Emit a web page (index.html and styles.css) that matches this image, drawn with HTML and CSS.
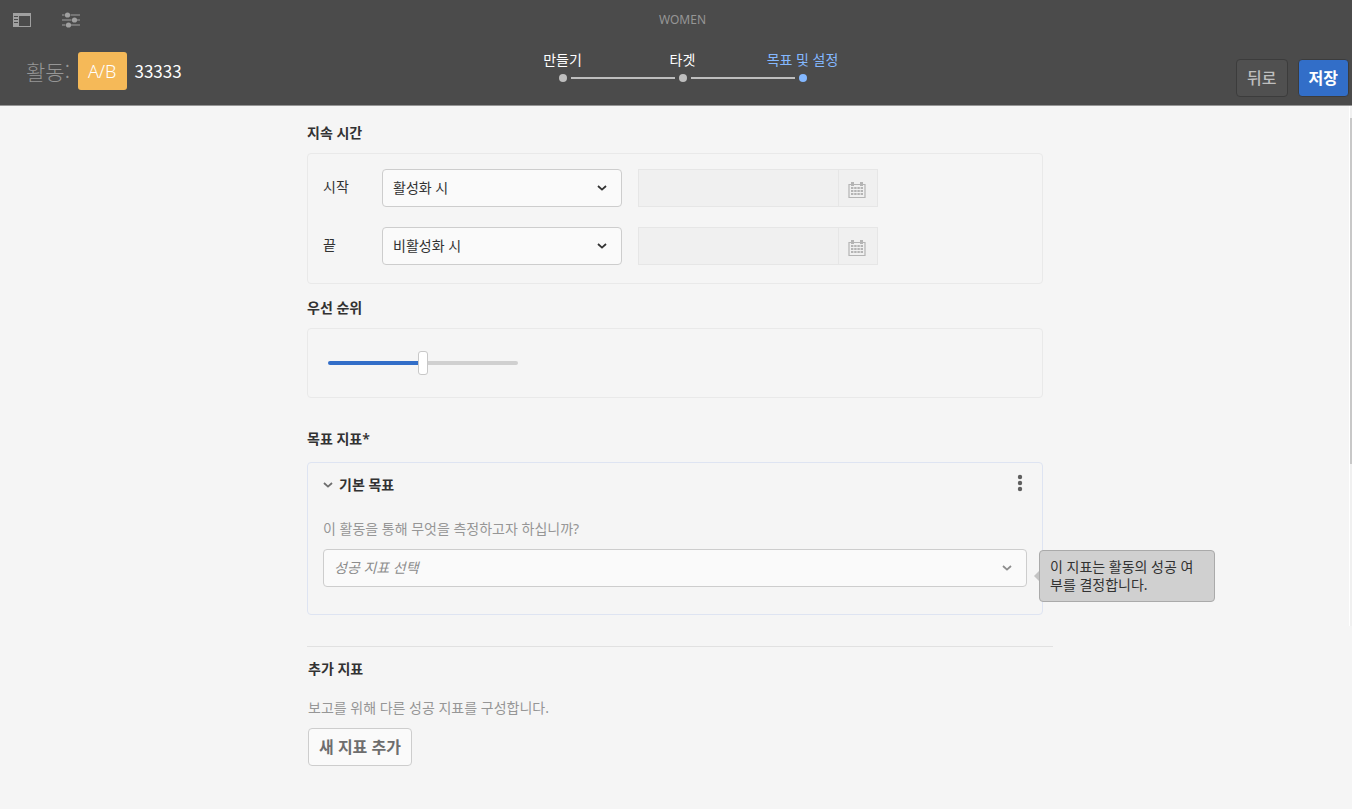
FILE: index.html
```html
<!DOCTYPE html>
<html lang="ko">
<head>
<meta charset="utf-8">
<meta name="viewport" content="width=device-width, initial-scale=1">
<title>활동: 33333</title>
<link rel="stylesheet" href="styles.css">
</head>
<body>
<svg class="sprite" aria-hidden="true">
  <symbol id="chevron" viewBox="0 0 10 8"><path d="M1 2l4 3.6L9 2" fill="none" stroke="currentColor" stroke-width="1.8"/></symbol>
  <symbol id="calendar" viewBox="0 0 18 17">
    <path d="M1 2.5h16v13H1z" fill="none" stroke="currentColor" stroke-width="1.2"/>
    <path d="M3 0h3v4H3zM12 0h3v4h-3z" fill="currentColor"/>
    <path d="M3 6h12M3 9h12M3 12h12" fill="none" stroke="currentColor" stroke-width="2" stroke-dasharray="2.4 .8"/>
  </symbol>
</svg>

<header class="header">
  <div class="toolbar">
    <div class="tools">
      <button class="tool" type="button" aria-label="사이드 패널">
        <svg width="18" height="14" viewBox="0 0 18 14"><path fill="currentColor" fill-rule="evenodd" d="M0 0h18v14H0zM6 3v10h11V3zM1 3v1h4V3zM1 6v1h4V6zM1 9v1h4V9z"/></svg>
      </button>
      <button class="tool" type="button" aria-label="설정">
        <svg width="20" height="16" viewBox="0 0 20 16"><path d="M1 3h2.5M9.500 3H19M1 8h9.500M16 8h3M1 13h3.500M10 13h9" stroke="currentColor" stroke-width="1.200"/><g fill="currentColor"><circle cx="6.500" cy="3" r="2.600"/><circle cx="13.500" cy="8" r="2.600"/><circle cx="7.500" cy="13" r="2.600"/></g></svg>
      </button>
    </div>
    <span class="site">WOMEN</span>
  </div>
  <div class="activity-bar">
    <h1 class="activity">
      <span class="activity-label">활동:</span>
      <span class="badge">A/B</span>
      <span class="activity-name">33333</span>
    </h1>
    <ol class="steps">
      <li class="step">만들기</li>
      <li class="step">타겟</li>
      <li class="step step-current" aria-current="step">목표 및 설정</li>
    </ol>
    <div class="actions">
      <button class="button button-back" type="button">뒤로</button>
      <button class="button button-save" type="button">저장</button>
    </div>
  </div>
</header>

<main class="content">
  <div class="scrollbar" aria-hidden="true"><div class="scroll-thumb"></div></div>
  <form class="form">
    <section>
      <h2 class="heading">지속 시간</h2>
      <div class="panel duration">
        <div class="row">
          <label class="row-label" for="start">시작</label>
          <div class="select">
            <select id="start"><option>활성화 시</option></select>
            <svg class="select-arrow" width="10" height="8"><use href="#chevron"/></svg>
          </div>
          <div class="date">
            <input type="text" aria-label="시작 날짜" disabled>
            <button type="button" aria-label="시작 날짜 선택" disabled><svg width="18" height="17"><use href="#calendar"/></svg></button>
          </div>
        </div>
        <div class="row">
          <label class="row-label" for="end">끝</label>
          <div class="select">
            <select id="end"><option>비활성화 시</option></select>
            <svg class="select-arrow" width="10" height="8"><use href="#chevron"/></svg>
          </div>
          <div class="date">
            <input type="text" aria-label="끝 날짜" disabled>
            <button type="button" aria-label="끝 날짜 선택" disabled><svg width="18" height="17"><use href="#calendar"/></svg></button>
          </div>
        </div>
      </div>
    </section>

    <section>
      <h2 class="heading"><label for="priority">우선 순위</label></h2>
      <div class="panel priority">
        <input class="slider" id="priority" type="range" min="0" max="100" value="50">
      </div>
    </section>

    <section class="goals">
      <h2 class="heading">목표 지표*</h2>
      <div class="panel goal">
        <div class="goal-head">
          <button class="toggle" type="button" aria-expanded="true"><svg class="toggle-arrow" width="10" height="8"><use href="#chevron"/></svg>기본 목표</button>
          <button class="more" type="button" aria-label="추가 작업"><svg width="6" height="18" viewBox="0 0 6 18"><g fill="currentColor"><circle cx="3" cy="3" r="2.200"/><circle cx="3" cy="9" r="2.200"/><circle cx="3" cy="15" r="2.200"/></g></svg></button>
        </div>
        <label class="hint" for="metric">이 활동을 통해 무엇을 측정하고자 하십니까?</label>
        <div class="select select-wide">
          <select id="metric"><option>성공 지표 선택</option></select>
          <svg class="select-arrow" width="10" height="8"><use href="#chevron"/></svg>
          <div class="tooltip" role="tooltip">이 지표는 활동의 성공 여부를 결정합니다.</div>
        </div>
      </div>
    </section>

    <section class="extra">
      <h2 class="heading">추가 지표</h2>
      <p class="hint">보고를 위해 다른 성공 지표를 구성합니다.</p>
      <button class="button button-add" type="button">새 지표 추가</button>
    </section>
  </form>
</main>
</body>
</html>
```

FILE: styles.css
```css
* {
  box-sizing: border-box;
}

body {
  margin: 0;
  background: #f5f5f5;
  color: #323232;
  font: 14px/18px "Noto Sans", "Noto Sans CJK KR", sans-serif;
}

button,
input,
select {
  font: inherit;
  color: inherit;
}

button {
  padding: 0;
  border: 0;
  background: none;
}

svg {
  display: block;
}

.sprite {
  display: none;
}

.header {
  background: #4b4b4b;
  border-bottom: 1px solid #969696;
}

.toolbar,
.activity-bar {
  display: grid;
  grid-template-columns: 1fr auto 1fr;
}

.toolbar {
  height: 40px;
  align-items: center;
  padding-left: 13px;
  color: #969696;
}

.tools {
  display: flex;
  align-items: center;
  gap: 30px;
}

.tool {
  color: #a0a0a0;
}

.site {
  font-size: 12px;
}

.activity-bar {
  min-height: 65px;
  padding: 0 3px 8px 26px;
}

.activity {
  display: flex;
  align-items: center;
  gap: 8px;
  margin: 0;
  padding-top: 4px;
  font-size: 20px;
  font-weight: 300;
}

.activity-label {
  color: #969696;
  font-family: "Noto Sans CJK KR", sans-serif;
  font-size: 21px;
}

.badge {
  padding: 10px;
  border-radius: 3px;
  background: #f5b958;
  color: #fff;
  font-size: 18px;
}

.activity-name {
  color: #fff;
  font-family: "Noto Sans CJK KR", sans-serif;
  font-size: 17px;
  font-weight: 400;
}

.steps {
  display: flex;
  margin: 0 0 0 -10px;
  padding: 11px 0 0;
  list-style: none;
  color: #fff;
}

.step {
  position: relative;
  width: 120px;
  text-align: center;
}

.step::before {
  content: "";
  display: block;
  position: absolute;
  top: 23px;
  left: 56px;
  width: 8px;
  height: 8px;
  border-radius: 50%;
  background: #bebebe;
}

.step:not(:last-child)::after {
  content: "";
  position: absolute;
  top: 26px;
  left: 68px;
  width: 104px;
  height: 2px;
  background: #bebebe;
}

.step-current {
  color: #84b8ff;
}

.step-current::before {
  background: #84b8ff;
}

.actions {
  display: flex;
  justify-content: flex-end;
  align-items: flex-end;
  gap: 10px;
}

.button {
  height: 38px;
  padding: 0 10px;
  border: 1px solid #cdcdcd;
  border-radius: 4px;
  font-size: 16px;
  font-weight: 500;
}

.button-back {
  border-color: #3c3c3c;
  background: #505050;
  color: #bebebe;
}

.button-save {
  border-color: #3c3c3c;
  background: #326ec8;
  color: #fff;
  font-weight: 700;
}

.button-add {
  background: #fafafa;
  color: #6e6e6e;
  font-weight: 700;
}

.content {
  position: relative;
  padding: 18px 2px 42px 0;
}

.scrollbar {
  position: absolute;
  top: 0;
  right: 0;
  width: 3px;
  height: 520px;
  padding-top: 12px;
  border-left: 1px solid #fff;
  background: #f0f0f0;
}

.scroll-thumb {
  height: 346px;
  background: #c8c8c8;
}

.form {
  max-width: 736px;
  margin: 0 auto;
}

.heading {
  margin: 0;
  padding-bottom: 11px;
  font-size: 14px;
  line-height: 18px;
  font-weight: 600;
}

.panel {
  padding: 15px;
  border: 1px solid #e9e9e9;
  border-radius: 4px;
}

.duration {
  display: grid;
  gap: 20px;
  padding-bottom: 18px;
  margin-bottom: 15px;
}

.row {
  display: flex;
}

.row-label {
  width: 59px;
  padding-top: 9px;
}

.select {
  position: relative;
  width: 240px;
}

.select select {
  display: block;
  width: 100%;
  height: 38px;
  padding: 0 32px 0 10px;
  border: 1px solid #cdcdcd;
  border-radius: 4px;
  background: #fafafa;
  appearance: none;
}

.select-arrow {
  position: absolute;
  top: 15px;
  right: 15px;
  pointer-events: none;
}

.date {
  display: flex;
  width: 240px;
  height: 38px;
  margin-left: 16px;
  border: 1px solid #e6e6e6;
  background: #f0f0f0;
  color: #b4b4b4;
}

.date input {
  flex: 1;
  min-width: 0;
  border: 0;
  background: none;
}

.date button {
  width: 39px;
  padding: 4px 0 0 9px;
  border-left: 1px solid #e6e6e6;
}

.priority {
  padding: 22px 20px;
  margin-bottom: 32px;
}

.slider {
  display: block;
  width: 190px;
  height: 24px;
  margin: 0;
  background: none;
  appearance: none;
}

.slider::-webkit-slider-runnable-track {
  height: 4px;
  border-radius: 2px;
  background: linear-gradient(to right, #326ec8 50%, #d0d0d0 50%);
}

.slider::-webkit-slider-thumb {
  width: 10px;
  height: 24px;
  margin-top: -10px;
  border: 1px solid #c8c8c8;
  border-radius: 3px;
  background: #fff;
  appearance: none;
}

.goals .heading {
  padding-bottom: 14px;
}

.goal {
  padding: 11px 15px 27px;
  margin-bottom: 31px;
  border-color: #dee4f2;
}

.goal-head {
  display: flex;
  justify-content: space-between;
  padding-bottom: 24px;
}

.toggle {
  display: flex;
  align-items: center;
  gap: 6px;
  height: 22px;
  font-weight: 600;
}

.toggle-arrow {
  color: #6e6e6e;
}

.more {
  height: 18px;
  margin-right: 4px;
  color: #5f5f5f;
}

.hint {
  display: block;
  margin: 0;
  padding-bottom: 11px;
  color: #969696;
}

.select-wide {
  width: auto;
}

.select-wide select {
  color: #8c8c8c;
  font-style: italic;
}

.select-wide .select-arrow {
  color: #8c8c8c;
}

.tooltip {
  position: absolute;
  top: 1px;
  left: calc(100% + 12px);
  width: 176px;
  padding: 7px 10px;
  border: 1px solid #aaa;
  border-radius: 4px;
  background: #d0d0d0;
}

.tooltip::before {
  content: "";
  position: absolute;
  top: 20px;
  left: -6px;
  border: solid transparent;
  border-width: 5px 5px 5px 0;
  border-right-color: #c4c4c4;
}

.extra {
  margin-right: -10px;
  padding: 13px 0 0 1px;
  border-top: 1px solid #e1e1e1;
}

.extra .heading {
  padding-bottom: 21px;
}
```
